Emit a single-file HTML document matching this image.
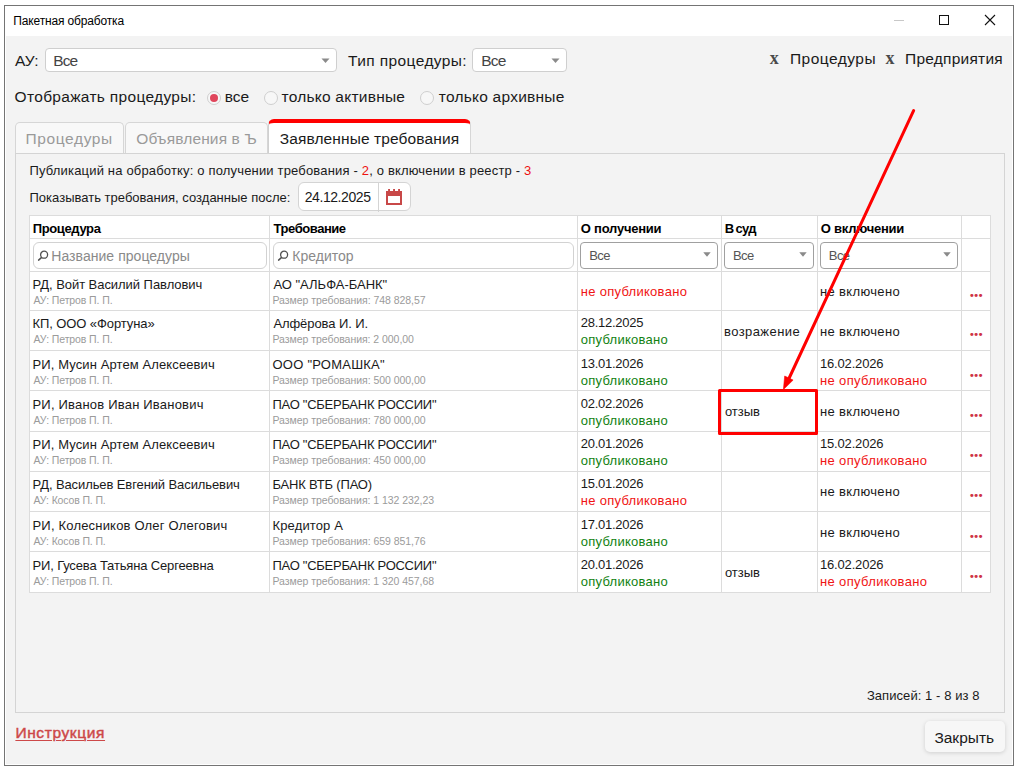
<!DOCTYPE html>
<html lang="ru">
<head>
<meta charset="utf-8">
<title>Пакетная обработка</title>
<style>
html,body{margin:0;padding:0;}
body{width:1017px;height:768px;overflow:hidden;background:#fff;position:relative;font-family:"Liberation Sans",sans-serif;}
.a{position:absolute;box-sizing:border-box;}
.t{position:absolute;white-space:nowrap;line-height:1;}
.win{left:4px;top:5px;width:1010px;height:761px;border:1px solid #747474;background:#fff;}
.bg{left:6px;top:36px;width:1006px;height:728px;background:#f3f3f3;}
.sel{background:#fff;border:1px solid #cfcfcf;border-radius:4px;}
.fsel{background:#fff;border:1px solid #a0a0a0;border-radius:4px;}
.finp{background:#fff;border:1px solid #d2d2d2;border-radius:6px;}
.radio{width:14px;height:14px;border-radius:50%;border:1px solid #cfcfcf;background:#f7f7f7;}
.tab{background:#f8f8f8;border:1px solid #d6d6d6;border-bottom:none;border-radius:5px 5px 0 0;}
.panel{left:15px;top:153px;width:990px;height:560px;border:1px solid #d4d4d4;background:#f3f3f3;}
.tbl{left:29px;top:215px;width:962px;height:378px;background:#fff;border:1px solid #dcdcdc;}
.hl{left:30px;width:960px;height:1px;background:#dcdcdc;}
.vl{top:216px;width:1px;height:376px;background:#dcdcdc;}
.dots{font-family:"Liberation Serif",serif;font-size:19px;font-weight:700;color:#cf3346;letter-spacing:-0.35px;}
.btn{left:925px;top:721px;width:80px;height:31px;background:#f7f7f7;border-radius:5px;box-shadow:0 1px 4px rgba(0,0,0,0.15);}
</style>
</head>
<body>
<div class="a win"></div>
<div class="a bg"></div>

<!-- window controls -->
<svg class="a" style="left:880px;top:6px" width="130" height="30" viewBox="0 0 130 30">
  <path d="M14 14.5H24" stroke="#c8c8c8" stroke-width="1" fill="none"/>
  <rect x="59.5" y="9.5" width="9" height="9" stroke="#111" stroke-width="1" fill="none"/>
  <path d="M105 9 L115 19 M115 9 L105 19" stroke="#111" stroke-width="1.1" fill="none"/>
</svg>

<!-- selects -->
<div class="a sel" style="left:45px;top:48px;width:292px;height:24px"></div>
<svg class="a" style="left:321px;top:58px" width="10" height="6"><path d="M0.5 0.5H8.5L4.5 5Z" fill="#8a8a8a"/></svg>
<div class="a sel" style="left:472px;top:48px;width:95px;height:24px"></div>
<svg class="a" style="left:551px;top:58px" width="10" height="6"><path d="M0.5 0.5H8.5L4.5 5Z" fill="#8a8a8a"/></svg>

<!-- close marks (serif bold x) -->
<span class="t" style="left:769.8px;top:49.4px;font-family:'Liberation Serif',serif;font-weight:700;font-size:18px;color:#4a4a4a">x</span>
<span class="t" style="left:885.4px;top:49.4px;font-family:'Liberation Serif',serif;font-weight:700;font-size:18px;color:#4a4a4a">x</span>

<!-- radios -->
<div class="a radio" style="left:207px;top:91px"></div>
<div class="a" style="left:210px;top:94px;width:8px;height:8px;border-radius:50%;background:#e0455b"></div>
<div class="a radio" style="left:264px;top:91px"></div>
<div class="a radio" style="left:420px;top:91px"></div>

<!-- tabs -->
<div class="a tab" style="left:15px;top:122px;width:109px;height:32px"></div>
<div class="a tab" style="left:125px;top:122px;width:143px;height:32px"></div>
<div class="a panel"></div>
<div class="a" style="left:268px;top:119px;width:203px;height:34px;background:#fff;border:1px solid #d6d6d6;border-bottom:none;border-top:4px solid #f00;border-radius:6px 6px 0 0;border-left-color:#d0d0d0"></div>

<!-- info lines -->
<span class="t" style="left:29.5px;top:164px;font-size:13px;color:#1a1a1a;letter-spacing:0.17px">Публикаций на обработку: о получении требования - <span style="color:#e11">2</span>, о включении в реестр - <span style="color:#e11">3</span></span>
<span class="t" style="left:29.5px;top:191px;font-size:13px;color:#1a1a1a;letter-spacing:0.01px">Показывать требования, созданные после:</span>

<!-- date field -->
<div class="a" style="left:298px;top:182px;width:113px;height:29px;background:#fff;border:1px solid #d4d4d4;border-radius:6px"></div>
<div class="a" style="left:378px;top:182px;width:1px;height:30px;background:#d4d4d4"></div>
<svg class="a" style="left:386px;top:189px" width="16" height="16" viewBox="0 0 16 16">
  <path d="M0 2H2.1V0H4V2H7.1V0H9V2H12.1V0H14V2H16V16H0Z M2 7V14.1H14V7Z" fill="#c84848" fill-rule="evenodd"/>
</svg>

<!-- table -->
<div class="a tbl"></div>
<div class="a hl" style="top:238px"></div>
<div class="a hl" style="top:271px"></div>
<div class="a hl" style="top:310px"></div>
<div class="a hl" style="top:350px"></div>
<div class="a hl" style="top:390px"></div>
<div class="a hl" style="top:431px"></div>
<div class="a hl" style="top:471px"></div>
<div class="a hl" style="top:511px"></div>
<div class="a hl" style="top:551px"></div>
<div class="a vl" style="left:269px"></div>
<div class="a vl" style="left:577px"></div>
<div class="a vl" style="left:721px"></div>
<div class="a vl" style="left:817px"></div>
<div class="a vl" style="left:961px"></div>

<!-- filters -->
<div class="a finp" style="left:33px;top:242px;width:234px;height:27px"></div>
<div class="a finp" style="left:273px;top:242px;width:301px;height:27px"></div>
<svg class="a" style="left:37px;top:249px" width="13" height="13" viewBox="0 0 13 13"><circle cx="7.1" cy="5.7" r="3.5" stroke="#505050" stroke-width="1.3" fill="none"/><path d="M4.4 8.6L1.6 11.1" stroke="#505050" stroke-width="1.5" stroke-linecap="round"/></svg>
<svg class="a" style="left:277px;top:249px" width="13" height="13" viewBox="0 0 13 13"><circle cx="7.1" cy="5.7" r="3.5" stroke="#505050" stroke-width="1.3" fill="none"/><path d="M4.4 8.6L1.6 11.1" stroke="#505050" stroke-width="1.5" stroke-linecap="round"/></svg>
<div class="a fsel" style="left:580px;top:242px;width:138px;height:27px"></div>
<svg class="a" style="left:703px;top:252px" width="9" height="6"><path d="M0.3 0.3H7.7L4 4.8Z" fill="#8a8a8a"/></svg>
<div class="a fsel" style="left:724px;top:242px;width:90px;height:27px"></div>
<svg class="a" style="left:799px;top:252px" width="9" height="6"><path d="M0.3 0.3H7.7L4 4.8Z" fill="#8a8a8a"/></svg>
<div class="a fsel" style="left:820px;top:242px;width:138px;height:27px"></div>
<svg class="a" style="left:943px;top:252px" width="9" height="6"><path d="M0.3 0.3H7.7L4 4.8Z" fill="#8a8a8a"/></svg>

<!-- button + link -->
<div class="a btn"></div>

<span class="t" style="left:13.30px;top:15px;font-size:12px;color:#000;letter-spacing:-0.154px;">Пакетная обработка</span>
<span class="t" style="left:15.00px;top:53px;font-size:15.5px;color:#1a1a1a;">АУ:</span>
<span class="t" style="left:53.30px;top:53px;font-size:15.5px;color:#444;letter-spacing:-0.900px;">Все</span>
<span class="t" style="left:348.00px;top:53px;font-size:15.5px;color:#1a1a1a;letter-spacing:0.402px;">Тип процедуры:</span>
<span class="t" style="left:481.20px;top:53px;font-size:15.5px;color:#444;letter-spacing:-0.810px;">Все</span>
<span class="t" style="left:789.90px;top:51px;font-size:15.5px;color:#1a1a1a;letter-spacing:0.495px;">Процедуры</span>
<span class="t" style="left:905.10px;top:51px;font-size:15.5px;color:#1a1a1a;letter-spacing:0.234px;">Предприятия</span>
<span class="t" style="left:14.60px;top:89px;font-size:15.5px;color:#1a1a1a;letter-spacing:0.311px;">Отображать процедуры:</span>
<span class="t" style="left:224.80px;top:89px;font-size:15.5px;color:#1a1a1a;">все</span>
<span class="t" style="left:281.50px;top:89px;font-size:15.5px;color:#1a1a1a;letter-spacing:0.238px;">только активные</span>
<span class="t" style="left:438.80px;top:89px;font-size:15.5px;color:#1a1a1a;letter-spacing:0.231px;">только архивные</span>
<span class="t" style="left:25.60px;top:131px;font-size:15.5px;color:#9a9a9a;letter-spacing:0.608px;">Процедуры</span>
<span class="t" style="left:136.20px;top:131px;font-size:15.5px;color:#9a9a9a;letter-spacing:0.132px;">Объявления в Ъ</span>
<span class="t" style="left:279.70px;top:131px;font-size:15.5px;color:#1a1a1a;letter-spacing:0.117px;">Заявленные требования</span>
<span class="t" style="left:304.70px;top:190px;font-size:14px;color:#1a1a1a;letter-spacing:-0.420px;">24.12.2025</span>
<span class="t" style="left:32.70px;top:222px;font-size:13px;color:#000;font-weight:700;letter-spacing:-0.360px;">Процедура</span>
<span class="t" style="left:273.60px;top:222px;font-size:13px;color:#000;font-weight:700;letter-spacing:-0.450px;">Требование</span>
<span class="t" style="left:580.80px;top:222px;font-size:13px;color:#000;font-weight:700;letter-spacing:-0.234px;">О получении</span>
<span class="t" style="left:724.70px;top:222px;font-size:13px;color:#000;font-weight:700;letter-spacing:-0.700px;word-spacing:-0.8px;">В суд</span>
<span class="t" style="left:820.80px;top:222px;font-size:13px;color:#000;font-weight:700;letter-spacing:-0.234px;">О включении</span>
<span class="t" style="left:51.30px;top:249px;font-size:14px;color:#8a8a8a;letter-spacing:0.042px;">Название процедуры</span>
<span class="t" style="left:292.30px;top:249px;font-size:14px;color:#8a8a8a;">Кредитор</span>
<span class="t" style="left:589.20px;top:249px;font-size:13px;color:#555;letter-spacing:-0.585px;">Все</span>
<span class="t" style="left:732.90px;top:249px;font-size:13px;color:#555;letter-spacing:-0.585px;">Все</span>
<span class="t" style="left:828.80px;top:249px;font-size:13px;color:#555;letter-spacing:-0.585px;">Все</span>
<span class="t" style="left:32.50px;top:278px;font-size:13px;color:#1a1a1a;letter-spacing:-0.049px;">РД, Войт Василий Павлович</span>
<span class="t" style="left:33.40px;top:295px;font-size:10.5px;color:#9b9b9b;letter-spacing:-0.102px;">АУ: Петров П. П.</span>
<span class="t" style="left:273.40px;top:278px;font-size:13px;color:#1a1a1a;">АО "АЛЬФА-БАНК"</span>
<span class="t" style="left:272.50px;top:295px;font-size:10.5px;color:#9b9b9b;letter-spacing:-0.042px;">Размер требования: 748 828,57</span>
<span class="t" style="left:580.80px;top:285px;font-size:13px;color:#f01414;letter-spacing:0.283px;">не опубликовано</span>
<span class="t" style="left:820.00px;top:285px;font-size:13px;color:#1a1a1a;letter-spacing:0.342px;">не включено</span>
<span class="t" style="left:32.50px;top:317px;font-size:13px;color:#1a1a1a;letter-spacing:-0.090px;">КП, ООО «Фортуна»</span>
<span class="t" style="left:33.40px;top:334px;font-size:10.5px;color:#9b9b9b;letter-spacing:-0.102px;">АУ: Петров П. П.</span>
<span class="t" style="left:273.40px;top:317px;font-size:13px;color:#1a1a1a;letter-spacing:-0.083px;">Алфёрова И. И.</span>
<span class="t" style="left:272.50px;top:334px;font-size:10.5px;color:#9b9b9b;letter-spacing:-0.045px;">Размер требования: 2 000,00</span>
<span class="t" style="left:580.80px;top:316px;font-size:13px;color:#1a1a1a;letter-spacing:-0.270px;">28.12.2025</span>
<span class="t" style="left:580.80px;top:333px;font-size:13px;color:#128212;letter-spacing:0.262px;">опубликовано</span>
<span class="t" style="left:724.00px;top:325px;font-size:13px;color:#1a1a1a;letter-spacing:0.420px;">возражение</span>
<span class="t" style="left:820.00px;top:325px;font-size:13px;color:#1a1a1a;letter-spacing:0.342px;">не включено</span>
<span class="t" style="left:32.50px;top:358px;font-size:13px;color:#1a1a1a;letter-spacing:0.108px;">РИ, Мусин Артем Алексеевич</span>
<span class="t" style="left:33.40px;top:375px;font-size:10.5px;color:#9b9b9b;letter-spacing:-0.102px;">АУ: Петров П. П.</span>
<span class="t" style="left:272.50px;top:358px;font-size:13px;color:#1a1a1a;letter-spacing:0.232px;">ООО "РОМАШКА"</span>
<span class="t" style="left:272.50px;top:375px;font-size:10.5px;color:#9b9b9b;letter-spacing:-0.042px;">Размер требования: 500 000,00</span>
<span class="t" style="left:580.80px;top:357px;font-size:13px;color:#1a1a1a;letter-spacing:-0.270px;">13.01.2026</span>
<span class="t" style="left:580.80px;top:374px;font-size:13px;color:#128212;letter-spacing:0.262px;">опубликовано</span>
<span class="t" style="left:820.00px;top:357px;font-size:13px;color:#1a1a1a;letter-spacing:-0.170px;">16.02.2026</span>
<span class="t" style="left:820.00px;top:374px;font-size:13px;color:#f01414;letter-spacing:0.347px;">не опубликовано</span>
<span class="t" style="left:32.50px;top:398px;font-size:13px;color:#1a1a1a;letter-spacing:0.200px;">РИ, Иванов Иван Иванович</span>
<span class="t" style="left:33.40px;top:415px;font-size:10.5px;color:#9b9b9b;letter-spacing:-0.102px;">АУ: Петров П. П.</span>
<span class="t" style="left:272.50px;top:398px;font-size:13px;color:#1a1a1a;letter-spacing:-0.270px;">ПАО "СБЕРБАНК РОССИИ"</span>
<span class="t" style="left:272.50px;top:415px;font-size:10.5px;color:#9b9b9b;letter-spacing:-0.042px;">Размер требования: 780 000,00</span>
<span class="t" style="left:580.80px;top:397px;font-size:13px;color:#1a1a1a;letter-spacing:-0.270px;">02.02.2026</span>
<span class="t" style="left:580.80px;top:414px;font-size:13px;color:#128212;letter-spacing:0.262px;">опубликовано</span>
<span class="t" style="left:724.90px;top:405px;font-size:13px;color:#1a1a1a;">отзыв</span>
<span class="t" style="left:820.00px;top:405px;font-size:13px;color:#1a1a1a;letter-spacing:0.342px;">не включено</span>
<span class="t" style="left:32.50px;top:438px;font-size:13px;color:#1a1a1a;letter-spacing:0.108px;">РИ, Мусин Артем Алексеевич</span>
<span class="t" style="left:33.40px;top:455px;font-size:10.5px;color:#9b9b9b;letter-spacing:-0.102px;">АУ: Петров П. П.</span>
<span class="t" style="left:272.50px;top:438px;font-size:13px;color:#1a1a1a;letter-spacing:-0.270px;">ПАО "СБЕРБАНК РОССИИ"</span>
<span class="t" style="left:272.50px;top:455px;font-size:10.5px;color:#9b9b9b;letter-spacing:-0.042px;">Размер требования: 450 000,00</span>
<span class="t" style="left:580.80px;top:437px;font-size:13px;color:#1a1a1a;letter-spacing:-0.270px;">20.01.2026</span>
<span class="t" style="left:580.80px;top:454px;font-size:13px;color:#128212;letter-spacing:0.262px;">опубликовано</span>
<span class="t" style="left:820.00px;top:437px;font-size:13px;color:#1a1a1a;letter-spacing:-0.170px;">15.02.2026</span>
<span class="t" style="left:820.00px;top:454px;font-size:13px;color:#f01414;letter-spacing:0.347px;">не опубликовано</span>
<span class="t" style="left:32.50px;top:478px;font-size:13px;color:#1a1a1a;letter-spacing:-0.102px;">РД, Васильев Евгений Васильевич</span>
<span class="t" style="left:33.40px;top:495px;font-size:10.5px;color:#9b9b9b;letter-spacing:-0.141px;">АУ: Косов П. П.</span>
<span class="t" style="left:272.50px;top:478px;font-size:13px;color:#1a1a1a;letter-spacing:-0.173px;">БАНК ВТБ (ПАО)</span>
<span class="t" style="left:272.50px;top:495px;font-size:10.5px;color:#9b9b9b;letter-spacing:-0.048px;">Размер требования: 1 132 232,23</span>
<span class="t" style="left:580.80px;top:477px;font-size:13px;color:#1a1a1a;letter-spacing:-0.270px;">15.01.2026</span>
<span class="t" style="left:580.80px;top:494px;font-size:13px;color:#f01414;letter-spacing:0.283px;">не опубликовано</span>
<span class="t" style="left:820.00px;top:485px;font-size:13px;color:#1a1a1a;letter-spacing:0.342px;">не включено</span>
<span class="t" style="left:32.50px;top:519px;font-size:13px;color:#1a1a1a;letter-spacing:0.190px;">РИ, Колесников Олег Олегович</span>
<span class="t" style="left:33.40px;top:536px;font-size:10.5px;color:#9b9b9b;letter-spacing:-0.141px;">АУ: Косов П. П.</span>
<span class="t" style="left:272.50px;top:519px;font-size:13px;color:#1a1a1a;letter-spacing:0.140px;">Кредитор А</span>
<span class="t" style="left:272.50px;top:536px;font-size:10.5px;color:#9b9b9b;letter-spacing:-0.042px;">Размер требования: 659 851,76</span>
<span class="t" style="left:580.80px;top:518px;font-size:13px;color:#1a1a1a;letter-spacing:-0.270px;">17.01.2026</span>
<span class="t" style="left:580.80px;top:535px;font-size:13px;color:#128212;letter-spacing:0.262px;">опубликовано</span>
<span class="t" style="left:820.00px;top:526px;font-size:13px;color:#1a1a1a;letter-spacing:0.342px;">не включено</span>
<span class="t" style="left:32.50px;top:559px;font-size:13px;color:#1a1a1a;letter-spacing:-0.153px;">РИ, Гусева Татьяна Сергеевна</span>
<span class="t" style="left:33.40px;top:576px;font-size:10.5px;color:#9b9b9b;letter-spacing:-0.102px;">АУ: Петров П. П.</span>
<span class="t" style="left:272.50px;top:559px;font-size:13px;color:#1a1a1a;letter-spacing:-0.270px;">ПАО "СБЕРБАНК РОССИИ"</span>
<span class="t" style="left:272.50px;top:576px;font-size:10.5px;color:#9b9b9b;letter-spacing:-0.048px;">Размер требования: 1 320 457,68</span>
<span class="t" style="left:580.80px;top:558px;font-size:13px;color:#1a1a1a;letter-spacing:-0.270px;">20.01.2026</span>
<span class="t" style="left:580.80px;top:575px;font-size:13px;color:#128212;letter-spacing:0.262px;">опубликовано</span>
<span class="t" style="left:724.90px;top:566px;font-size:13px;color:#1a1a1a;">отзыв</span>
<span class="t" style="left:820.00px;top:558px;font-size:13px;color:#1a1a1a;letter-spacing:-0.170px;">16.02.2026</span>
<span class="t" style="left:820.00px;top:575px;font-size:13px;color:#f01414;letter-spacing:0.347px;">не опубликовано</span>
<span class="t" style="left:15.40px;top:725px;font-size:15.5px;color:#cd4848;letter-spacing:0.620px;-webkit-text-stroke:0.45px #cd4848;text-decoration:underline;text-decoration-thickness:1.2px;text-underline-offset:1.6px;">Инструкция</span>
<span class="t" style="left:866.90px;top:689px;font-size:13px;color:#1a1a1a;letter-spacing:0.070px;">Записей: 1 - 8 из 8</span>
<span class="t" style="left:934.40px;top:730px;font-size:15.5px;color:#1a1a1a;">Закрыть</span>
<span class="t dots" style="left:969.4px;top:281px">...</span>
<span class="t dots" style="left:969.4px;top:320px">...</span>
<span class="t dots" style="left:969.4px;top:361px">...</span>
<span class="t dots" style="left:969.4px;top:401px">...</span>
<span class="t dots" style="left:969.4px;top:441px">...</span>
<span class="t dots" style="left:969.4px;top:481px">...</span>
<span class="t dots" style="left:969.4px;top:522px">...</span>
<span class="t dots" style="left:969.4px;top:562px">...</span>

<!-- annotation: red rectangle and arrow -->
<div class="a" style="left:718px;top:389px;width:100px;height:46px;border:3px solid #f00;border-radius:1.5px"></div>
<svg class="a" style="left:0;top:0;pointer-events:none" width="1017" height="768" viewBox="0 0 1017 768">
  <path d="M913.6 110.6 L788.5 379.5" stroke="#f00" stroke-width="3" stroke-linecap="round" fill="none"/>
  <path d="M783.4 389.6 L784.7 376.0 L793.1 380.1 Z" fill="#f00" stroke="#f00" stroke-width="0.6" stroke-linejoin="round"/>
</svg>
</body>
</html>
